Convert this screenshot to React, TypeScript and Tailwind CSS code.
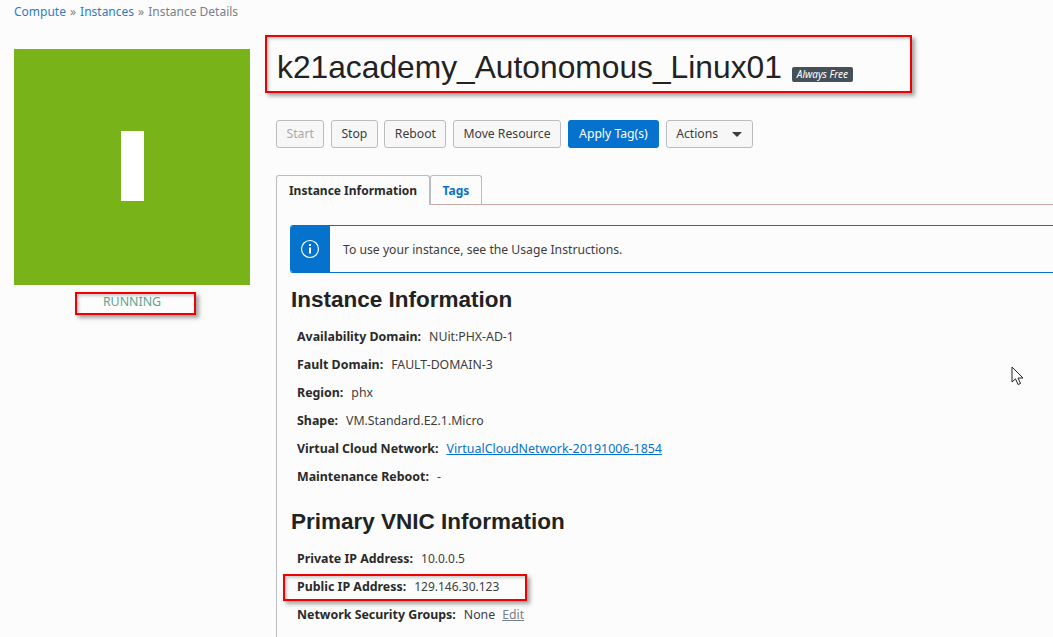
import React from "react";

const Field = ({ label, children }: { label: string; children: React.ReactNode }) => (
  <div className="relative flex h-[28px] items-center pl-[7px] text-[12.3px] leading-[28px] text-[#3c3c3c]">
    <span className="mr-[8px] text-[12.4px] font-bold text-[#2a2a2a]">{label}</span>
    {children}
  </div>
);

const Btn = ({ children, className = "" }: { children: React.ReactNode; className?: string }) => (
  <button className={`flex h-[28px] items-center rounded-[3px] border border-[#b9bdc0] bg-[#f7f7f7] px-[9.5px] text-[12.2px] text-[#3c3c3c] ${className}`}>
    {children}
  </button>
);

const Mark = ({ className }: { className: string }) => (
  <div className={`pointer-events-none absolute border-[2px] border-[#f00000] shadow-[3px_3px_4px_rgba(90,90,90,0.55),inset_2px_2px_3px_rgba(90,90,90,0.3)] ${className}`} />
);

export default function App() {
  return (
    <div className="flex h-[637px] w-[1053px] flex-col overflow-hidden bg-[#fcfcfc] font-['Noto_Sans','Open_Sans',sans-serif]">
      <div className="flex h-[49px] shrink-0 items-start pl-[14px] pt-[3px] text-[12px] leading-[18px] text-[#7a7f8a]">
        <span className="text-[#2f7bc4]">Compute</span>
        <span className="mx-[4px]">»</span>
        <span className="text-[#2f7bc4]">Instances</span>
        <span className="mx-[4px]">»</span>
        <span>Instance Details</span>
      </div>
      <div className="flex min-h-0 flex-1 pl-[14px]">
        <div className="w-[236px] shrink-0">
          <div className="flex h-[236px] items-center justify-center bg-[#78b31a]">
            <div className="mb-[2px] h-[70px] w-[23px] bg-white" />
          </div>
          <div className="relative mt-[9px] text-center text-[12.4px] leading-[16px] text-[#5ea78c]">
            RUNNING
            <Mark className="left-[61px] top-[-2px] h-[23px] w-[121px]" />
          </div>
        </div>
        <div className="ml-[26px] flex min-w-0 flex-1 flex-col">
          <div className="relative flex h-[36px] items-center">
            <h1 className="ml-px font-['Liberation_Sans',Arial,sans-serif] text-[31.75px] leading-[36px] text-[#222222]">
              k21academy_Autonomous_Linux01
            </h1>
            <span className="ml-[10px] mt-[14px] rounded-[2px] bg-[#465058] px-[5px] text-[10px] italic leading-[15px] text-white">
              Always Free
            </span>
            <Mark className="left-[-11px] top-[-14px] h-[58px] w-[647px]" />
          </div>
          <div className="mt-[35px] flex gap-[6.5px]">
            <Btn className="bg-[#eeeeee] text-[#a9a9a9]">Start</Btn>
            <Btn>Stop</Btn>
            <Btn>Reboot</Btn>
            <Btn>Move Resource</Btn>
            <button className="flex h-[28px] items-center rounded-[3px] bg-[#0572ce] px-[11.5px] text-[12.2px] text-white">Apply Tag(s)</button>
            <Btn>
              Actions
              <span className="ml-[14px] h-0 w-0 border-x-[5px] border-t-[5px] border-x-transparent border-t-[#3c3c3c]" />
            </Btn>
          </div>
          <div className="mt-[27px] flex h-[30px] border-b border-[#c9a9a9]">
            <div className="flex h-[30px] w-[154px] items-center justify-center rounded-t-[3px] border border-b-0 border-[#b9bdc0] bg-[#fcfcfc] text-[12px] font-bold text-[#2a2a2a]">
              Instance Information
            </div>
            <div className="flex h-[30px] w-[52px] items-center justify-center rounded-t-[3px] border border-b-0 border-[#b9bdc0] text-[12px] font-bold text-[#0572ce]">
              Tags
            </div>
          </div>
          <div className="flex-1 border-l border-[#b9bdc0] pl-[13px] pt-[20px]">
            <div className="flex h-[48px] rounded-l-[3px] border-y border-[#0572ce]">
              <div className="flex w-[40px] items-center justify-center rounded-l-[3px] bg-[#0572ce]">
                <svg width="20" height="20" viewBox="0 0 20 20" fill="none" stroke="white">
                  <circle cx="10" cy="10" r="8.5" strokeWidth="1.2" />
                  <path d="M10 8.5V14.5" strokeWidth="2" />
                  <path d="M10 5V7" strokeWidth="2" />
                </svg>
              </div>
              <div className="flex items-center pl-[13px] pt-[2px] text-[12.2px] text-[#3c3c3c]">To use your instance, see the Usage Instructions.</div>
            </div>
            <h2 className="ml-px mt-[12px] font-['Liberation_Sans',Arial,sans-serif] text-[22.5px] font-bold leading-[30px] text-[#222222]">Instance Information</h2>
            <div className="mt-[8px]">
              <Field label="Availability Domain:">NUit:PHX-AD-1</Field>
              <Field label="Fault Domain:">FAULT-DOMAIN-3</Field>
              <Field label="Region:">phx</Field>
              <Field label="Shape:">VM.Standard.E2.1.Micro</Field>
              <Field label="Virtual Cloud Network:"><span className="text-[12.45px] text-[#0572ce] underline">VirtualCloudNetwork-20191006-1854</span></Field>
              <Field label="Maintenance Reboot:">-</Field>
            </div>
            <h2 className="ml-px mt-[16px] font-['Liberation_Sans',Arial,sans-serif] text-[22.5px] font-bold leading-[30px] text-[#222222]">Primary VNIC Information</h2>
            <div className="mt-[8px]">
              <Field label="Private IP Address:"><span className="text-[12px]">10.0.0.5</span></Field>
              <Field label="Public IP Address:">
                <span className="text-[12px]">129.146.30.123</span>
                <Mark className="left-[-7px] top-[1px] h-[27px] w-[244px]" />
              </Field>
              <Field label="Network Security Groups:">
                None<span className="ml-[7px] text-[#7a7f8a] underline">Edit</span>
              </Field>
            </div>
          </div>
        </div>
      </div>
      <svg className="absolute left-[1011px] top-[366px]" width="14" height="21" viewBox="0 0 14 21" fill="white" stroke="#222" strokeWidth="1">
        <path d="M1 1V16L4.5 12.8L7 18.5L9.5 17.5L7 12H12Z" />
      </svg>
    </div>
  );
}
